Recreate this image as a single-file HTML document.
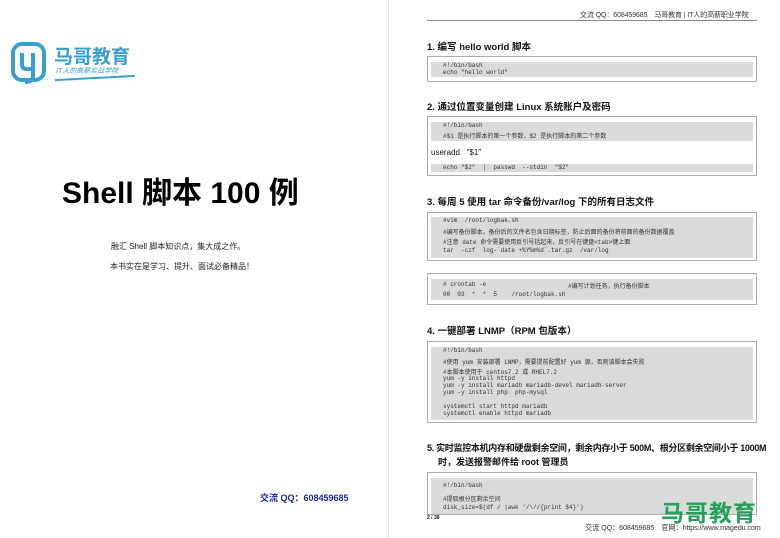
<!DOCTYPE html>
<html><head><meta charset="utf-8"><style>
*{margin:0;padding:0;box-sizing:border-box}
body{width:780px;height:538px;background:#fff;position:relative;overflow:hidden;font-family:"Liberation Sans","Noto Sans CJK SC",sans-serif;color:#111}
.a{position:absolute;white-space:nowrap}
.box{position:absolute;left:427px;width:330px;border:1px solid #aaa;background:#fff}
.g{position:absolute;left:3px;right:3px;background:#dadada}
.c{position:absolute;left:15px;font-family:"Liberation Mono","Noto Sans CJK SC",monospace;font-size:6px;color:#333;white-space:nowrap}
.h{position:absolute;font-size:9.5px;font-weight:bold;white-space:nowrap;left:427px}
</style></head><body>
<div class="a" style="left:388px;top:0;width:1px;height:538px;background:#ddd"></div>
<!-- left page -->
<svg class="a" style="left:11px;top:42px" width="36" height="43" viewBox="0 0 36 43"><rect x="2" y="2" width="31" height="36" rx="9" fill="none" stroke="#3a9fcf" stroke-width="4"/><path d="M11 11 V22 Q11 27 16 27 H22 V11 M22 22 V34 Q22 40 14 40" fill="none" stroke="#3a9fcf" stroke-width="4"/></svg>
<div class="a" style="left:54px;top:42px;font-size:19px;font-weight:bold;color:#3a9fcf">马哥教育</div>
<div class="a" style="left:56px;top:66px;font-size:7px;color:#3a9fcf;font-style:italic">IT人的高薪实战学院</div>
<div class="a" style="left:55px;top:77px;width:80px;height:2px;background:#3a9fcf;transform:rotate(-3deg)"></div>
<div class="a" style="left:62px;top:168px;font-size:30px;font-weight:bold;color:#000">Shell 脚本 100 例</div>
<div class="a" style="left:111px;top:241px;font-size:8px;color:#222">融汇 Shell 脚本知识点，集大成之作。</div>
<div class="a" style="left:110px;top:261px;font-size:8px;color:#222">本书实在是学习、提升、面试必备精品！</div>
<div class="a" style="left:260px;top:491px;font-size:9px;font-weight:bold;color:#1a2a9a">交流 QQ：608459685</div>
<!-- right page -->
<div class="a" style="left:580px;top:10px;font-size:7px;color:#333;letter-spacing:-0.1px">交流 QQ：608459685　马哥教育 | IT人的高薪职业学院</div>
<div class="a" style="left:427px;top:20px;width:330px;height:1px;background:#888"></div>
<div class="h" style="top:39px">1.  编写 hello world 脚本</div>
<div class="box" style="top:56px;height:26px"><div class="g" style="top:5px;height:15px"></div><div class="c" style="top:5px">#!/bin/bash</div><div class="c" style="top:12px">echo "hello world"</div></div>
<div class="h" style="top:99px">2.  通过位置变量创建 Linux 系统账户及密码</div>
<div class="box" style="top:116px;height:60px"><div class="g" style="top:5px;height:19px"></div><div class="c" style="top:5px">#!/bin/bash</div><div class="c" style="top:14px">#$1 是执行脚本的第一个参数，$2 是执行脚本的第二个参数</div><div class="a" style="left:3px;top:31px;font-size:8px">useradd&nbsp;&nbsp;&nbsp;"$1"</div><div class="g" style="top:47px;height:8px"></div><div class="c" style="top:47px">echo "$2"&nbsp;&nbsp;|&nbsp;&nbsp;passwd&nbsp;&nbsp;--stdin&nbsp;&nbsp;"$2"</div></div>
<div class="h" style="top:194px">3.  每周 5 使用 tar 命令备份/var/log 下的所有日志文件</div>
<div class="box" style="top:212px;height:49px"><div class="g" style="top:4px;height:41px"></div><div class="c" style="top:4px">#vim&nbsp;&nbsp;/root/logbak.sh</div><div class="c" style="top:14px">#编写备份脚本，备份后的文件名包含日期标签，防止后面的备份将前面的备份数据覆盖</div><div class="c" style="top:24px">#注意 date 命令需要使用反引号括起来，反引号在键盘&lt;tab&gt;键上面</div><div class="c" style="top:34px">tar&nbsp;&nbsp;-czf&nbsp;&nbsp;log-`date +%Y%m%d`.tar.gz&nbsp;&nbsp;/var/log</div></div>
<div class="box" style="top:273px;height:32px"><div class="g" style="top:5px;height:21px"></div><div class="c" style="top:7px">#&nbsp;crontab&nbsp;-e</div><div class="c" style="left:140px;top:7px">#编写计划任务，执行备份脚本</div><div class="c" style="top:17px">00&nbsp;&nbsp;03&nbsp;&nbsp;*&nbsp;&nbsp;*&nbsp;&nbsp;5&nbsp;&nbsp;&nbsp;&nbsp;/root/logbak.sh</div></div>
<div class="h" style="top:323px">4.  一键部署 LNMP（RPM 包版本）</div>
<div class="box" style="top:341px;height:82px"><div class="g" style="top:5px;height:73px"></div>
<div class="c" style="top:5px">#!/bin/bash</div><div class="c" style="top:15px">#使用 yum 安装部署 LNMP，需要提前配置好 yum 源，否则该脚本会失败</div><div class="c" style="top:25px">#本脚本使用于 centos7.2 或 RHEL7.2</div><div class="c" style="top:33px">yum -y install httpd</div><div class="c" style="top:40px">yum -y install mariadb mariadb-devel mariadb-server</div><div class="c" style="top:47px">yum -y install php&nbsp;&nbsp;php-mysql</div><div class="c" style="top:61px">systemctl start httpd mariadb</div><div class="c" style="top:68px">systemctl enable httpd mariadb</div></div>
<div class="h" style="top:441px;font-size:9px;letter-spacing:-0.3px">5.  实时监控本机内存和硬盘剩余空间，剩余内存小于 500M、根分区剩余空间小于 1000M</div>
<div class="h" style="top:455px;left:438px;font-size:9px">时，发送报警邮件给 root 管理员</div>
<div class="box" style="top:472px;height:42px;border-bottom:none"><div class="g" style="top:5px;height:37px"></div><div class="c" style="top:9px">#!/bin/bash</div><div class="c" style="top:21px">#提取根分区剩余空间</div><div class="c" style="top:31px">disk_size=$(df / |awk '/\//{print $4}')</div></div>
<div class="a" style="left:427px;top:514px;width:330px;height:1px;background:#aaa"></div>
<div class="a" style="left:427px;top:515px;font-size:5px;font-weight:bold">2 / 38</div>
<div class="a" style="left:661px;top:494px;font-size:23px;font-weight:bold;color:#22a35a;letter-spacing:1px">马哥教育</div>
<div class="a" style="left:585px;top:523px;font-size:7.2px;color:#333;letter-spacing:-0.1px">交流 QQ：608459685　官网：https://www.magedu.com</div>
</body></html>
